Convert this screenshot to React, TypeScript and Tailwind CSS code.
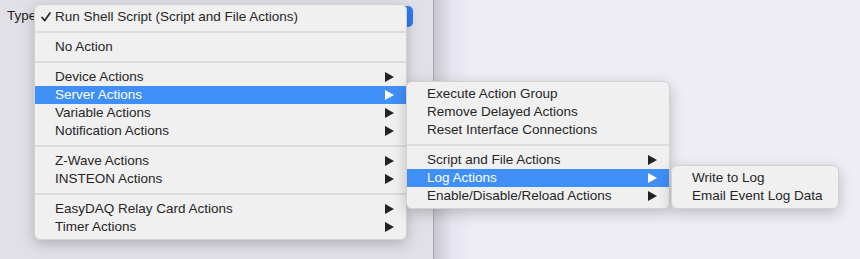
import React from 'react';

type Item = { label: string; sub?: boolean; active?: boolean; checked?: boolean } | 'sep';

const mainItems: Item[] = [
  { label: 'Run Shell Script (Script and File Actions)', checked: true },
  'sep',
  { label: 'No Action' },
  'sep',
  { label: 'Device Actions', sub: true },
  { label: 'Server Actions', sub: true, active: true },
  { label: 'Variable Actions', sub: true },
  { label: 'Notification Actions', sub: true },
  'sep',
  { label: 'Z-Wave Actions', sub: true },
  { label: 'INSTEON Actions', sub: true },
  'sep',
  { label: 'EasyDAQ Relay Card Actions', sub: true },
  { label: 'Timer Actions', sub: true },
];

const serverItems: Item[] = [
  { label: 'Execute Action Group' },
  { label: 'Remove Delayed Actions' },
  { label: 'Reset Interface Connections' },
  'sep',
  { label: 'Script and File Actions', sub: true },
  { label: 'Log Actions', sub: true, active: true },
  { label: 'Enable/Disable/Reload Actions', sub: true },
];

const logItems: Item[] = [{ label: 'Write to Log' }, { label: 'Email Event Log Data' }];

function Arrow({ white }: { white?: boolean }) {
  return (
    <svg width="9" height="10" viewBox="0 0 9 10" className="shrink-0">
      <polygon points="0,0 9,5 0,10" fill={white ? '#ffffff' : '#222222'} />
    </svg>
  );
}

function Menu({ items, className }: { items: Item[]; className: string }) {
  return (
    <div
      className={`absolute py-[3px] rounded-[6px] bg-[#f0f0f0] border border-[#d2d2d4] shadow-[0_4px_14px_rgba(0,0,0,0.22)] ${className}`}
    >
      {items.map((it, i) =>
        it === 'sep' ? (
          <div key={i} className="h-3 flex items-center">
            <div className="w-full h-[2px] bg-[#dcdcdc]" />
          </div>
        ) : (
          <div
            key={i}
            className={`relative h-[18px] flex items-center pl-[20px] pr-[12px] ${
              it.active ? 'bg-[#3f8ff6] text-white' : 'text-[#262626]'
            }`}
          >
            {it.checked && (
              <svg width="10" height="10" viewBox="0 0 10 10" className="absolute left-[6px] top-[4px]">
                <path d="M1 5.5 L3.8 8.6 L9 1" fill="none" stroke="#262626" strokeWidth="1.7" strokeLinecap="round" strokeLinejoin="round" />
              </svg>
            )}
            <span className="flex-1 whitespace-nowrap">{it.label}</span>
            {it.sub && <Arrow white={it.active} />}
          </div>
        )
      )}
    </div>
  );
}

export default function App() {
  return (
    <div
      className="relative w-[860px] h-[259px] overflow-hidden flex text-[13.5px] leading-none"
      style={{ fontFamily: '"Liberation Sans", Arial, sans-serif' }}
    >
      <div className="w-[433px] h-full bg-[#e2e0e7] relative">
        <div className="absolute left-[7px] top-[9px] text-[#1e1e1e]">Type</div>
        <div className="absolute left-[380px] top-[6px] w-[33px] h-[21px] rounded-[5px] bg-[#2f7cf0]" />
      </div>
      <div className="w-px h-full bg-[#aeacb3]" />
      <div className="flex-1 h-full bg-[linear-gradient(to_right,#c9c7ce,#e6e4ee_18px,#eeedf6_40px)]" />

      <Menu items={mainItems} className="left-[34px] top-[4px] w-[373px]" />
      <Menu items={serverItems} className="left-[406px] top-[81px] w-[264px]" />
      <Menu items={logItems} className="left-[671px] top-[165px] w-[168px]" />
    </div>
  );
}
